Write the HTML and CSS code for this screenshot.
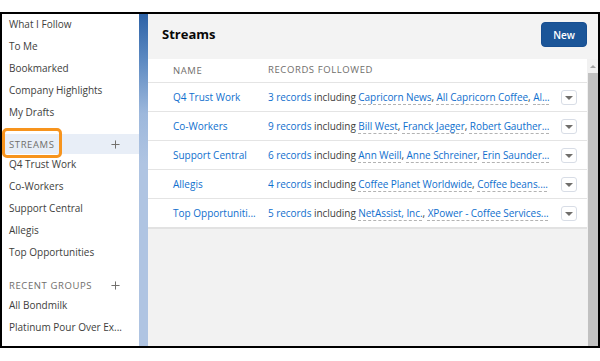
FILE: index.html
```html
<!DOCTYPE html>
<html>
<head>
<meta charset="utf-8">
<link rel="stylesheet" href="styles.css">
</head>
<body>
<div class="frame">
  <aside class="sidebar">
    <ul class="nav">
      <li>What I Follow</li>
      <li>To Me</li>
      <li>Bookmarked</li>
      <li>Company Highlights</li>
      <li>My Drafts</li>
    </ul>
    <div class="section-head active">
      <span class="label">STREAMS</span>
      <svg class="plus" viewBox="0 0 10 10"><path d="M5 0.5v9M0.5 5h9"/></svg>
      <div class="focus-ring"></div>
    </div>
    <ul class="nav">
      <li>Q4 Trust Work</li>
      <li>Co-Workers</li>
      <li>Support Central</li>
      <li>Allegis</li>
      <li>Top Opportunities</li>
    </ul>
    <div class="section-head groups">
      <span class="label">RECENT GROUPS</span>
      <svg class="plus" viewBox="0 0 10 10"><path d="M5 0.5v9M0.5 5h9"/></svg>
    </div>
    <ul class="nav">
      <li>All Bondmilk</li>
      <li>Platinum Pour Over Ex...</li>
    </ul>
  </aside>
  <div class="strip"></div>
  <main class="main">
    <header class="head">
      <h1 class="title">Streams</h1>
      <button class="btn-new">New</button>
    </header>
    <div class="body">
      <div class="table">
        <div class="row th">
          <div class="c-name">NAME</div>
          <div class="c-rec">RECORDS FOLLOWED</div>
        </div>
        <div class="row">
          <div class="c-name"><a class="lnk">Q4 Trust Work</a></div>
          <div class="c-rec"><a class="lnk">3 records</a> including <a class="lnk ul">Capricorn News</a>, <a class="lnk ul">All Capricorn Coffee</a>, <a class="lnk ul">Al...</a></div>
          <div class="c-act"><span class="dd"></span></div>
        </div>
        <div class="row">
          <div class="c-name"><a class="lnk">Co-Workers</a></div>
          <div class="c-rec"><a class="lnk">9 records</a> including <a class="lnk ul">Bill West</a>, <a class="lnk ul">Franck Jaeger</a>, <a class="lnk ul">Robert Gauther...</a></div>
          <div class="c-act"><span class="dd"></span></div>
        </div>
        <div class="row">
          <div class="c-name"><a class="lnk">Support Central</a></div>
          <div class="c-rec"><a class="lnk">6 records</a> including <a class="lnk ul">Ann Weill</a>, <a class="lnk ul">Anne Schreiner</a>, <a class="lnk ul">Erin Saunder...</a></div>
          <div class="c-act"><span class="dd"></span></div>
        </div>
        <div class="row">
          <div class="c-name"><a class="lnk">Allegis</a></div>
          <div class="c-rec"><a class="lnk">4 records</a> including <a class="lnk ul">Coffee Planet Worldwide</a>, <a class="lnk ul">Coffee beans....</a></div>
          <div class="c-act"><span class="dd"></span></div>
        </div>
        <div class="row last">
          <div class="c-name"><a class="lnk">Top Opportuniti...</a></div>
          <div class="c-rec"><a class="lnk">5 records</a> including <a class="lnk ul">NetAssist, Inc.</a>, <a class="lnk ul">XPower - Coffee Services...</a></div>
          <div class="c-act"><span class="dd"></span></div>
        </div>
      </div>
      <div class="scrollbar">
        <div class="sb-up"></div>
        <div class="sb-thumb"></div>
      </div>
    </div>
  </main>
</div>
</body>
</html>
```
FILE: styles.css
```css
* { box-sizing: border-box; }
html, body { margin: 0; padding: 0; background: #fff; }
body {
  font-family: "Open Sans", "Liberation Sans", sans-serif;
  color: #3e3e3c;
  width: 600px;
  height: 361px;
  overflow: hidden;
}
.frame {
  margin-top: 12px;
  width: 600px;
  height: 336px;
  border: 2px solid #000;
  display: flex;
  overflow: hidden;
}
.sidebar {
  width: 137px;
  flex: none;
  background: #fff;
  font-size: 10px;
}
.nav { list-style: none; margin: 0; padding: 0; }
.nav li {
  height: 22px;
  line-height: 20px;
  padding-left: 7px;
  white-space: nowrap;
  color: #3e3e3c;
}
.section-head {
  position: relative;
  height: 20px;
  display: flex;
  align-items: center;
  padding-left: 7px;
  margin-top: 10px;
}
.section-head.active { background: #e8eef7; }
.section-head.groups { margin-top: 11px; }
.section-head .label {
  font-size: 9.5px;
  letter-spacing: 0.6px;
  color: #706e6b;
  flex: 1;
}
.plus {
  width: 9px;
  height: 9px;
  margin-right: 19px;
  stroke: #706e6b;
  stroke-width: 1.1;
  fill: none;
}
.focus-ring {
  position: absolute;
  left: 0;
  top: -6px;
  width: 60px;
  height: 30px;
  border: 3px solid #f7941d;
  border-radius: 5px;
}
.strip {
  width: 9px;
  flex: none;
  background: linear-gradient(180deg, #2d62a6 0%, #5d8ac2 14%, #9db8dc 30%, #afc4e2 45%, #afc4e2 100%);
}
.main {
  flex: 1;
  display: flex;
  flex-direction: column;
  background: #f2f2f2;
}
.head {
  height: 45px;
  flex: none;
  display: flex;
  align-items: flex-start;
  justify-content: space-between;
  padding: 8px 11px 0 14px;
  background: #f3f3f3;
}
.title {
  margin: 0;
  font-size: 13px;
  line-height: 25px;
  font-weight: 700;
  color: #080707;
}
.btn-new {
  width: 46px;
  height: 25px;
  border: 1px solid #174e91;
  border-radius: 4px;
  background: #1b5598;
  color: #fff;
  font-family: inherit;
  font-size: 10px;
  font-weight: 600;
  padding: 0;
}
.body {
  flex: 1;
  display: flex;
}
.table {
  flex: 1;
}
.row {
  display: flex;
  align-items: center;
  height: 29px;
  background: #fff;
  border-bottom: 1px solid #e4e4e4;
  font-size: 10px;
  white-space: nowrap;
}
.row.th { height: 24px; }
.row.last { height: 30px; border-bottom: 2px solid #e2e2e2; }
.row.th .c-name, .row.th .c-rec {
  font-size: 9.5px;
  letter-spacing: 0.6px;
  color: #706e6b;
}
.c-name {
  width: 120px;
  padding-left: 25px;
  flex: none;
  overflow: hidden;
}
.c-rec {
  width: 288px;
  flex: none;
  overflow: hidden;
  color: #3e3e3c;
  letter-spacing: -0.05px;
  line-height: 16px;
  padding-bottom: 1px;
}
.c-act {
  flex: none;
  margin-left: 5px;
  display: flex;
}
.lnk { color: #0f6fce; text-decoration: none; }
.lnk.ul {
  text-decoration: underline dashed #b3b3b3;
  text-decoration-thickness: 1px;
  text-underline-offset: 3px;
  text-decoration-skip-ink: none;
}
.dd {
  position: relative;
  width: 16px;
  height: 15px;
  border: 1px solid #d8dde6;
  border-radius: 3px;
  background: #fff;
}
.dd::after {
  content: "";
  position: absolute;
  left: 3px;
  top: 5px;
  border-left: 4px solid transparent;
  border-right: 4px solid transparent;
  border-top: 4px solid #706e6b;
}
.scrollbar {
  width: 11px;
  flex: none;
  display: flex;
  flex-direction: column;
  background: #f1f1f1;
}
.sb-up {
  height: 14px;
  flex: none;
  position: relative;
}
.sb-up::after {
  content: "";
  position: absolute;
  left: 3px;
  top: 6px;
  border-left: 3px solid transparent;
  border-right: 3px solid transparent;
  border-bottom: 3px solid #a3a3a3;
}
.sb-thumb {
  flex: 1;
  margin-left: 1px;
  background: #c1c1c1;
}
```
